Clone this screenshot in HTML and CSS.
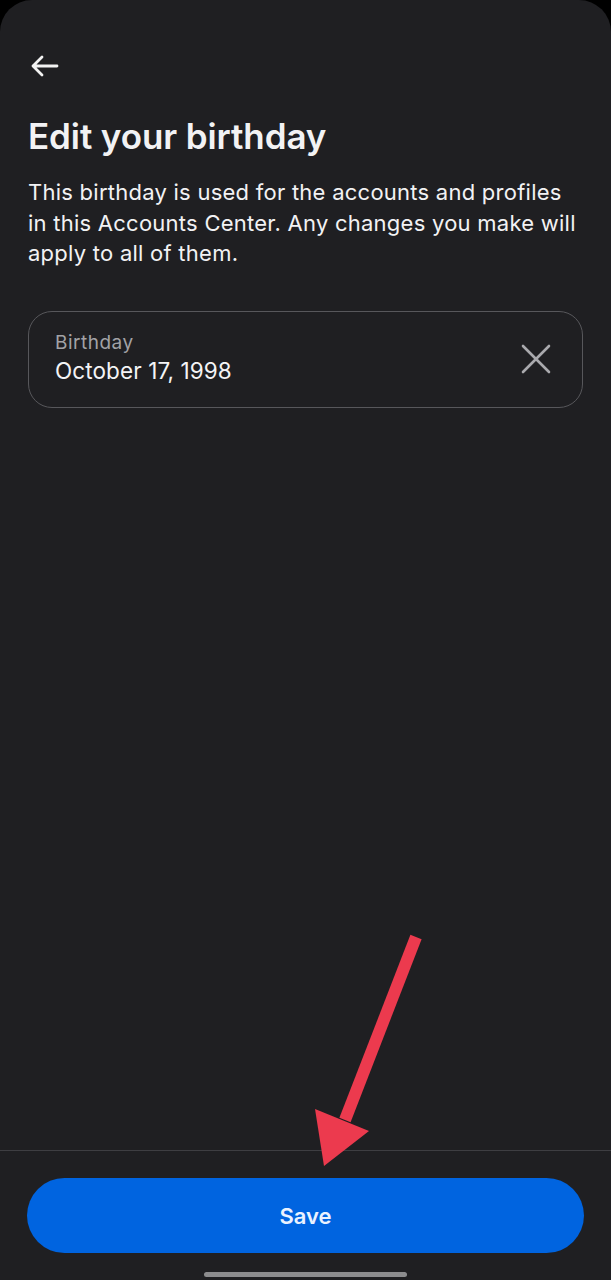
FILE: index.html
```html
<!DOCTYPE html>
<html lang="en">
<head>
<meta charset="utf-8">
<title>Edit your birthday</title>
<link rel="stylesheet" href="styles.css">
</head>
<body>
<div class="screen">
  <main class="content">
    <div class="topbar">
      <svg class="back" width="30" height="24" viewBox="0 0 30 24" aria-hidden="true">
        <path d="M28 12 H4 M13 3 L4 12 L13 21" fill="none" stroke="#f2f2f2" stroke-width="2.8" stroke-linecap="round" stroke-linejoin="round"/>
      </svg>
    </div>
    <h1 class="title">Edit your birthday</h1>
    <p class="desc">This birthday is used for the accounts and profiles in this Accounts Center. Any changes you make will apply to all of them.</p>
    <div class="field">
      <div class="field-text">
        <div class="field-label">Birthday</div>
        <div class="field-value">October 17, 1998</div>
      </div>
      <svg class="clear" width="30" height="30" viewBox="0 0 30 30" aria-hidden="true">
        <path d="M2 2 L28 28 M28 2 L2 28" fill="none" stroke="#a9a9ad" stroke-width="2.6" stroke-linecap="round"/>
      </svg>
    </div>
  </main>
  <footer class="footer">
    <button class="save">Save</button>
    <div class="home"></div>
  </footer>
  <svg class="annot" width="611" height="1280" viewBox="0 0 611 1280" aria-hidden="true">
    <line x1="416" y1="937" x2="345" y2="1120" stroke="#ec3a4e" stroke-width="12" stroke-linecap="butt"/>
    <polygon points="315,1109 369,1131 324,1166" fill="#ec3a4e"/>
  </svg>
</div>
</body>
</html>
```
FILE: styles.css
```css
html {
  background: #000;
}
body {
  margin: 0;
  font-family: Inter, Roboto, "Noto Sans", "Liberation Sans", sans-serif;
  color: #f2f2f4;
}
.screen {
  position: relative;
  width: 611px;
  height: 1280px;
  background: #1f1f22;
  border-radius: 32px 32px 0 0;
  display: flex;
  flex-direction: column;
  overflow: hidden;
}
.content {
  flex: 1;
  padding: 0 28px;
}
.topbar {
  height: 78px;
  padding-top: 54px;
  box-sizing: border-box;
}
.back {
  display: block;
  margin-left: 1px;
}
.title {
  margin: 38px 0 0;
  font-size: 35px;
  line-height: 40px;
  font-weight: 600;
  letter-spacing: -0.1px;
}
.desc {
  margin: 21px -2px 0 0;
  font-size: 22px;
  line-height: 30.5px;
  font-weight: 400;
  letter-spacing: 0.25px;
}
.field {
  margin-top: 42px;
  height: 97px;
  box-sizing: border-box;
  border: 1.5px solid #57575b;
  border-radius: 24px;
  display: flex;
  align-items: center;
  justify-content: space-between;
  padding: 0 31px 0 26px;
}
.field-text {
  display: flex;
  flex-direction: column;
  margin-bottom: 2px;
}
.field-label {
  font-size: 19px;
  line-height: 24px;
  letter-spacing: 0.5px;
  color: #a2a2a6;
}
.field-value {
  font-size: 22.5px;
  line-height: 31px;
  letter-spacing: 0.1px;
  color: #f4f4f6;
}
.clear {
  display: block;
}
.footer {
  border-top: 1px solid #3e3e42;
  padding: 27px 27px 3px 27px;
  display: flex;
  flex-direction: column;
  align-items: center;
}
.save {
  width: 100%;
  height: 75px;
  border: 0;
  border-radius: 38px;
  background: #0064e0;
  color: #eaf2ff;
  font-family: Inter, Roboto, "Noto Sans", "Liberation Sans", sans-serif;
  font-size: 22px;
  font-weight: 600;
}
.home {
  margin-top: 19px;
  width: 203px;
  height: 5px;
  border-radius: 3px;
  background: #8c8c8e;
}
.annot {
  position: absolute;
  left: 0;
  top: 0;
  pointer-events: none;
}
```
